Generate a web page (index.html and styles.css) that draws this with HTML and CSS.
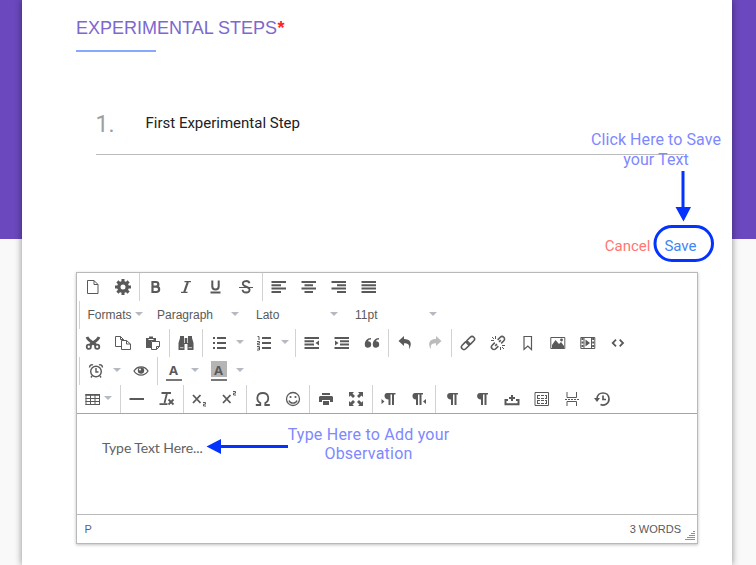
FILE: index.html
```html
<!DOCTYPE html>
<html lang="en">
<head>
<meta charset="utf-8">
<title>Experimental Steps</title>
<link rel="stylesheet" href="styles.css">
</head>
<body>
<main class="sheet">
  <h1 class="title">EXPERIMENTAL STEPS<span class="required">*</span></h1>
  <div class="title-rule"></div>
  <div class="step"><span class="step-number">1.</span><span class="step-name">First Experimental Step</span></div>
  <div class="actions"><a class="cancel">Cancel</a><a class="save">Save</a></div>

  <section class="editor">
    <div class="toolbar">
      <div class="row">
        <div class="group">
          <span class="btn"><svg viewBox="0 0 16 16"><path class="line" d="M2.500 1.500h6.500l4 4v9H2.500zM9 1.500v4h4"/></svg></span>
          <span class="btn"><svg viewBox="0 0 16 16"><circle cx="8" cy="8" r="4.200" fill="none" stroke="#595959" stroke-width="3.400"/><path class="line" stroke-width="3" d="M8 0v3M8 13v3M0 8h3M13 8h3M2.400 2.400l2 2M11.600 11.600l2 2M2.400 13.600l2-2M11.600 4.400l2-2"/></svg></span>
        </div>
        <div class="group">
          <span class="btn"><svg viewBox="0 0 16 16"><path class="line" stroke-width="2.200" d="M4.500 3h3.300c3.400 0 3.400 4.700 0 4.700H4.500h3.800c3.800 0 3.800 5.300 0 5.300H4.500zV13"/></svg></span>
          <span class="btn"><svg viewBox="0 0 16 16"><path class="line" stroke-width="1.300" d="M6.500 2.600H13M3 13.400h6.500"/><path class="line" stroke-width="2.200" d="M9.800 3L6.300 13"/></svg></span>
          <span class="btn"><svg viewBox="0 0 16 16"><path class="line" stroke-width="2" d="M4.300 1.500v5.700c0 4.400 6.400 4.400 6.400 0V1.500M2.500 13.500h10"/></svg></span>
          <span class="btn"><svg viewBox="0 0 16 16"><path class="line" stroke-width="1.800" d="M11.500 4.300C10.800 1 4.800 1.400 4.800 4.700c0 3.200 6.800 2.700 6.800 6 0 3.700-6.800 3.700-7.100 0"/><path class="line" d="M1 8.500h14"/></svg></span>
        </div>
        <div class="group">
          <span class="btn"><svg viewBox="0 0 16 16"><path class="line bars" d="M.5 3H15M.5 6.300H10M.5 9.600H15M.5 13H10"/></svg></span>
          <span class="btn"><svg viewBox="0 0 16 16"><path class="line bars" d="M.5 3H15M3.500 6.300H12M.5 9.600H15M3.500 13H12"/></svg></span>
          <span class="btn"><svg viewBox="0 0 16 16"><path class="line bars" d="M.5 3H15M6 6.300h9M.5 9.600H15M6 13h9"/></svg></span>
          <span class="btn"><svg viewBox="0 0 16 16"><path class="line bars" d="M.5 3H15M.5 6.300H15M.5 9.600H15M.5 13H15"/></svg></span>
        </div>
      </div>

      <div class="row offset">
        <div class="group">
          <span class="select formats">Formats<i class="caret"></i></span>
          <span class="select">Paragraph<i class="caret"></i></span>
          <span class="select">Lato<i class="caret"></i></span>
          <span class="select">11pt<i class="caret"></i></span>
        </div>
      </div>

      <div class="row">
        <div class="group">
          <span class="btn"><svg viewBox="0 0 16 16"><path class="line" stroke-width="2.800" d="M2 2c1 3 4 4.500 9 8M14 2c-1 3-4 4.500-9 8"/><circle class="line" stroke-width="1.800" cx="3.800" cy="11.800" r="2.100"/><circle class="line" stroke-width="1.800" cx="12.200" cy="11.800" r="2.100"/></svg></span>
          <span class="btn"><svg viewBox="0 0 16 16"><path class="line" d="M6 11.500H.5v-10h5l3 3V5M5.500 1.500v3h3M6.500 5.500h5l4 3.500v5.500h-9zM11.500 5.500v3.500h4"/></svg></span>
          <span class="btn"><svg viewBox="0 0 16 16"><path fill="#595959" d="M1 3h3V1.500h4V3h3v3H6v7H1z"/><path fill="#fff" d="M3.500 4h5v1h-5z"/><path fill="#fff" stroke="#595959" d="M6.500 6.500h8v5l-3 3h-5zM14.500 11.500h-3v3"/></svg></span>
        </div>
        <div class="group">
          <span class="btn"><svg viewBox="0 0 16 16"><path fill="#595959" d="M2 1h4v2h4V1h4v2l1.500 5v7H9.500V9h-3v6H.5V8L2 3z"/><path stroke="#fff" stroke-width=".7" d="M2 12.700h3.500M10.500 12.700H14M6.500 3v5M9.500 3v5"/></svg></span>
        </div>
        <div class="group">
          <span class="btn split"><svg viewBox="0 0 16 16"><path class="line bars" d="M6 3h9M6 8h9M6 13h9"/><path class="line bars" d="M2 3h2M2 8h2M2 13h2"/></svg><i class="caret"></i></span>
          <span class="btn split"><svg viewBox="0 0 16 16"><path class="line bars" d="M6 3h9M6 8h9M6 13h9"/><path class="line" d="M1.500 1.500H3V5M1 6.500h2.500v1.700H1.500v1.500H4M1 11.500h2.500v3.500H1M1.500 13.200h2"/></svg><i class="caret"></i></span>
        </div>
        <div class="group">
          <span class="btn"><svg viewBox="0 0 16 16"><path class="line bars" d="M.5 3H15M.5 6.300H10M.5 9.600H10M.5 13H15"/><path fill="#595959" d="M15 5.500v5L11.500 8z"/></svg></span>
          <span class="btn"><svg viewBox="0 0 16 16"><path class="line bars" d="M.5 3H15M6 6.300h9M6 9.600h9M.5 13H15"/><path fill="#595959" d="M1 5.500v5L4.500 8z"/></svg></span>
          <span class="btn"><svg viewBox="0 0 16 16"><path fill="#595959" d="M7 3C3 3 .8 6 .8 9.500a3.200 3.200 0 1 0 3-3.200C4.500 4.900 5.500 4.500 7 4.500zM15 3c-4 0-6.200 3-6.200 6.500a3.200 3.200 0 1 0 3-3.200c.7-1.400 1.700-1.800 3.200-1.800z"/></svg></span>
        </div>
        <div class="group">
          <span class="btn"><svg viewBox="0 0 16 16"><path fill="#595959" d="M1.500 6L7 1v3c6 0 9 4 5 10.500C13 9.500 11 8.200 7 8.200V11z"/></svg></span>
          <span class="btn faded"><svg viewBox="0 0 16 16"><path fill="#595959" d="M14.500 6L9 1v3C3 4 0 8 4 14.500 3 9.500 5 8.200 9 8.200V11z"/></svg></span>
        </div>
        <div class="group">
          <span class="btn"><svg viewBox="0 0 16 16"><g class="line" stroke-width="1.600" transform="rotate(-45 8 8)"><rect x="-.2" y="5.500" width="9" height="5" rx="2.500"/><rect x="7.200" y="5.500" width="9" height="5" rx="2.500"/></g></svg></span>
          <span class="btn"><svg viewBox="0 0 16 16"><g class="line" stroke-width="1.600" transform="rotate(-45 8 8)"><path d="M6 5.500H2.300a2.500 2.500 0 0 0 0 5H6M10 5.500h3.700a2.500 2.500 0 0 1 0 5H10M4 8h2.500M9.500 8H12"/></g><path class="line" d="M5.500 1v3M1 5.500h3M2 2l2 2M10.500 12v3M12 10.500h3M12 12l2 2"/></svg></span>
          <span class="btn"><svg viewBox="0 0 16 16"><path class="line" stroke-width="1.200" d="M4 1.500h7.500v13L7.800 11 4 14.500z"/></svg></span>
          <span class="btn"><svg viewBox="0 0 16 16"><path class="line" d="M.8 2.500h14v11H.8z"/><path fill="#595959" d="M2 13v-3l3.500-5 3.500 4 2-2 3 4v2z"/><circle cx="11.500" cy="5" r="1.400" fill="#595959"/></svg></span>
          <span class="btn"><svg viewBox="0 0 16 16"><path class="line" d="M.8 2.500h14v11H.8zM4 2.500v11M11.500 2.500v11"/><path class="line" stroke-width="2" stroke-dasharray="2 1.500" d="M2.500 3v10M13.200 3v10"/><path fill="#595959" d="M5.500 4.500v7L10 8z"/></svg></span>
          <span class="btn"><svg viewBox="0 0 16 16"><path class="line" stroke-width="1.800" d="M6 4.700L2.700 8 6 11.300M9.700 4.700L13 8l-3.300 3.300"/></svg></span>
        </div>
      </div>

      <div class="row offset">
        <div class="group">
          <span class="btn split"><svg viewBox="0 0 16 16"><circle class="line" stroke-width="1.400" cx="8" cy="8.500" r="5.300"/><path class="line" stroke-width="1.400" d="M8 5v4h2.500M1.500 4.500c0-2 2-3.300 3.500-2.500M14.500 4.500c0-2-2-3.300-3.500-2.500M4 13l-1 1.500M12 13l1 1.500"/></svg><i class="caret"></i></span>
          <span class="btn"><svg viewBox="0 0 16 16"><path class="line" stroke-width="1.300" d="M1 8c3.500-5.500 10.500-5.500 14 0-3.500 5.500-10.500 5.500-14 0z"/><circle cx="8" cy="7.500" r="3.200" fill="#595959"/><circle cx="7" cy="6.500" r="1" fill="#fff"/></svg></span>
        </div>
        <div class="group">
          <span class="btn split"><span class="letter">A</span><i class="caret"></i></span>
          <span class="btn split"><span class="letter filled">A</span><i class="caret"></i></span>
        </div>
      </div>

      <div class="row">
        <div class="group">
          <span class="btn split narrow"><svg viewBox="0 0 16 16"><path class="line" d="M.5 3.500H15M1 3v11M5.500 3v11M10 3v11M14.500 3v11M.5 7.500H15M.5 10.500H15M.5 13.500H15M.5 4.300H15"/></svg><i class="caret"></i></span>
        </div>
        <div class="group">
          <span class="btn"><svg viewBox="0 0 16 16"><path class="line bars" d="M.5 8H15"/></svg></span>
          <span class="btn"><svg viewBox="0 0 16 16"><path class="line" stroke-width="1.800" d="M2.500 2H12M8 2L5.500 12M.5 13.200h8"/><path class="line" stroke-width="1.800" d="M9.500 8.500l5 5M14.500 8.500l-5 5"/></svg></span>
        </div>
        <div class="group">
          <span class="btn"><svg viewBox="0 0 16 16"><path class="line" stroke-width="1.800" d="M1 4l7.500 8M8.500 4L1 12"/><path class="line" d="M11 11.500h2.500v1.700h-2v1.800H14"/></svg></span>
          <span class="btn"><svg viewBox="0 0 16 16"><path class="line" stroke-width="1.800" d="M1 4l7.500 8M8.500 4L1 12"/><path class="line" d="M11 .5h2.500v1.700h-2V4H14"/></svg></span>
        </div>
        <div class="group">
          <span class="btn"><svg viewBox="0 0 16 16"><path class="line" stroke-width="1.800" d="M.8 14h4.500v-2C.8 9.500 1.300 2 7.800 2s7 7.500 2.500 10v2h4.500"/></svg></span>
          <span class="btn"><svg viewBox="0 0 16 16"><circle class="line" stroke-width="1.300" cx="8" cy="8" r="6.500"/><path class="line" stroke-width="1.300" d="M4 9.500c1 3.500 7 3.500 8 0"/><circle cx="5.500" cy="6" r="1.100" fill="#595959"/><circle cx="10.500" cy="6" r="1.100" fill="#595959"/></svg></span>
        </div>
        <div class="group">
          <span class="btn"><svg viewBox="0 0 16 16"><path fill="#595959" d="M4 2h8v2H4zM2 5h12l1 1v5h-3V9H4v2H1V6zM5 10h6v4H5z"/></svg></span>
          <span class="btn"><svg viewBox="0 0 16 16"><path fill="#595959" d="M1 1h5L4.500 2.500 7 5 5 7 2.500 4.500 1 6zM15 1v5l-1.500-1.500L11 7 9 5l2.500-2.500L10 1zM1 15v-5l1.500 1.500L5 9l2 2-2.500 2.500L6 15zM15 15h-5l1.500-1.500L9 11l2-2 2.500 2.500L15 10z"/></svg></span>
        </div>
        <div class="group">
          <span class="btn"><svg viewBox="0 0 16 16"><path fill="#595959" d="M6 2h8.500v1.500H13V14h-2V3.500H9.500V14h-2V8.500C2.500 8.500 2.500 2 6 2zM.5 8l3 2.500-3 2.500z"/></svg></span>
          <span class="btn"><svg viewBox="0 0 16 16"><path fill="#595959" d="M4 2h8v1.500h-1.500V14h-2V3.500H7V14H5V8.500C.5 8.500.5 2 4 2zM15 8l-3 2.500 3 2.500z"/></svg></span>
        </div>
        <div class="group">
          <span class="btn"><svg viewBox="0 0 16 16"><path fill="#595959" d="M6 2h8v1.500h-1.500V14h-2V3.500H9V14H7V8.500C2 8.500 2 2 6 2z"/></svg></span>
          <span class="btn"><svg viewBox="0 0 16 16"><path fill="#595959" d="M6 2h8v1.500h-1.500V14h-2V3.500H9V14H7V8.500C2 8.500 2 2 6 2z"/></svg></span>
          <span class="btn"><svg viewBox="0 0 16 16"><path class="line" stroke-width="2" d="M4 9H1.500v4.200h13V9H12M8 4v6M5 7h6"/></svg></span>
          <span class="btn"><svg viewBox="0 0 16 16"><path class="line" d="M1 1.500h13.500v13H1z"/><path class="line" stroke-dasharray="3 1" d="M3 4.500h10M3 7.500h10M3 9.500h10M3 12.500h10M3.500 4v4M12.500 4v4M3.500 9v4M12.500 9v4"/></svg></span>
          <span class="btn"><svg viewBox="0 0 16 16"><path class="line" d="M3 1v5.500h9.500V1M3 15v-4.500h9.500V15"/><path class="line" stroke-dasharray="2 1" d="M1 8.500h14"/></svg></span>
          <span class="btn"><svg viewBox="0 0 16 16"><path class="line" stroke-width="1.700" d="M3 8c0-8 12-8 12 0 0 5-5 7-8.500 5.500M9 4.500v4h3"/><path fill="#595959" d="M0 7h6l-3 4z"/></svg></span>
        </div>
      </div>
    </div>
    <div class="content">Type Text Here...</div>
    <div class="status"><span class="path">P</span><span class="words">3 WORDS</span><svg class="grip" viewBox="0 0 10 10"><path d="M8 .5h2M6 2.500h4M4 4.500h6M2 6.500h8M0 8.500h10"/></svg></div>
  </section>
</main>

<div class="note save-note">Click Here to Save<br>your Text</div>
<div class="note type-note">Type Here to Add your<br>Observation</div>
<svg class="marks" viewBox="0 0 756 565"><path d="M683 171v38M288 446.500h-70" stroke-width="3"/><path class="head" d="M675.500 207h15.500l-7.500 14.500zM206.500 446.500l14.500-7.500v15z"/><rect x="655" y="226.500" width="57.500" height="34" rx="17" stroke-width="3"/></svg>
</body>
</html>
```
FILE: styles.css
```css
* { box-sizing: border-box; }

body {
  margin: 0;
  height: 565px;
  overflow: hidden;
  position: relative;
  background: linear-gradient(#6b48be 239px, #f9f9f9 239px);
  font-family: Roboto, sans-serif;
}

.sheet {
  width: 710px;
  height: 565px;
  margin-left: 22px;
  padding: 17px 34px 0 54px;
  background: #fff;
  box-shadow: 0 0 7px rgba(0, 0, 0, .45);
}

.title {
  margin: 0;
  height: 33px;
  font: 400 18px/22px "Liberation Sans", sans-serif;
  color: #7c68cf;
}
.required { color: #f22; font-weight: 700; margin-left: .5px; }
.title-rule { width: 80px; height: 2px; background: #88a8ff; }

.step {
  display: flex;
  height: 55px;
  margin: 48px 14px 0 20px;
  padding-top: 11px;
  border-bottom: 1px solid #bdbdbd;
}
.step-number { width: 50px; margin-left: -.5px; font-size: 23px; line-height: 27px; color: #9e9e9e; }
.step-name { font-size: 15px; line-height: 24px; color: #212121; }

.actions { display: flex; justify-content: flex-end; height: 117px; padding: 81px 1.500px 0 0; font-size: 15px; line-height: 20px; }
.cancel { margin-right: 14px; color: #ff7672; }
.save { color: #4285f4; }

.editor {
  width: 622px;
  height: 272px;
  border: 1px solid #b9b9b9;
  box-shadow: 0 1px 3px rgba(0, 0, 0, .25);
}
.toolbar { height: 141px; border-bottom: 1px solid #a5a5a5; }
.row { display: flex; height: 28px; }
.row.offset { padding-left: 2px; }
.group { display: flex; padding-right: 2px; }
.group + .group, .offset .group { border-left: 1px solid #d2d2d2; }
.btn { display: flex; width: 30px; padding-left: 1px; align-items: center; justify-content: center; }
.btn svg { width: 16px; height: 16px; flex: none; }
.faded { opacity: .4; }
.line { fill: none; stroke: #595959; }
.bars { stroke-width: 2; }

.split { width: 45px; justify-content: flex-start; padding-left: 7.500px; }
.split .caret { margin-left: 9.500px; }
.narrow { width: 41px; }
.narrow .caret { margin-left: 3.500px; }
.caret { border: 4px solid transparent; border-top-color: #b5bac2; border-bottom: 0; margin-top: -2px; }

.select {
  display: flex;
  width: 99px;
  padding: 0 9px 0 8px;
  align-items: center;
  justify-content: space-between;
  font: 12px/28px "Liberation Sans", sans-serif;
  color: #595959;
}
.formats { width: 69px; padding: 0 6px 0 7.500px; }

.letter {
  width: 16px;
  height: 20px;
  margin-top: -1px;
  border-bottom: 2px solid #777;
  font: bold 13px/18px "Open Sans", sans-serif;
  text-align: center;
  color: #595959;
}
.filled { background: linear-gradient(#b5b5b5 16px, #fff 16px); }

.content { height: 100px; padding: 24px 25px; font: 14px/20px Lato, sans-serif; letter-spacing: -.08px; color: #626262; }
.status {
  display: flex;
  height: 29px;
  padding: 0 2px 0 7.500px;
  align-items: center;
  border-top: 1px solid #b9b9b9;
  font: 11px/26px "Liberation Sans", sans-serif;
  color: #595959;
}
.status .path, .status .words { margin-top: -1px; }
.path { color: #56627c; }
.status .words { margin-left: auto; }
.grip { width: 10px; height: 10px; margin: 13px 0 0 4px; stroke: #8990a0; }

.note { position: absolute; text-align: center; font-size: 16px; line-height: 20px; color: #7e88ff; white-space: nowrap; }
.save-note { left: 590px; top: 130px; width: 132px; letter-spacing: .07px; }
.type-note { left: 287px; top: 425px; width: 163px; line-height: 19px; letter-spacing: .22px; }
.marks { position: absolute; left: 0; top: 0; width: 756px; height: 565px; fill: none; stroke: #0433ff; pointer-events: none; }
.marks .head { fill: #0433ff; stroke: none; }
```
